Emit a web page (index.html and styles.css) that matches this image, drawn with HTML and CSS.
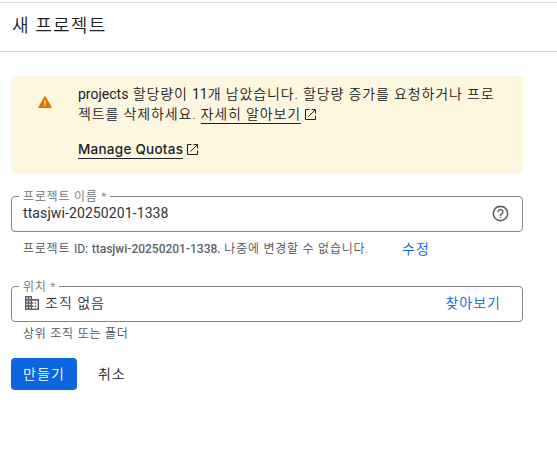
FILE: index.html
```
<!DOCTYPE html>
<html lang="ko">
<head>
<meta charset="utf-8">
<title>새 프로젝트</title>
<link rel="stylesheet" href="styles.css">
</head>
<body>
<header class="header"><h1 class="title">새 프로젝트</h1></header>
<main class="main">
  <section class="notice">
    <svg class="warning" viewBox="0 0 14 12"><path d="M7 .3Q7.4.3 7.7.8L13.8 11.2Q14 12 13.2 12H.8Q0 12 .2 11.2L6.3.8Q6.6.3 7 .3Z" fill="#e37400"/><path d="M6.3 4.5h1.4v3.2H6.3zM6.3 8.7h1.4v1.3H6.3z" fill="#fef7e0"/></svg>
    <div class="message">
      <p class="line"><span class="words"><span class="latin">projects</span> 할당량이 <span class="latin">11</span>개 남았습니다. 할당량 증가를 요청하거나 프로</span></p>
      <p class="line"><span>젝트를 삭제하세요.</span> <a class="link more">자세히 알아보기</a><svg class="external" viewBox="0 0 11 11"><path d="M4.5.5h-4v10h10V6.5M6.5.5h4v4M10.2.8 3.5 7.5" /></svg></p>
      <p class="line quotas"><a class="link manage">Manage Quotas</a><svg class="external" viewBox="0 0 11 11"><path d="M4.5.5h-4v10h10V6.5M6.5.5h4v4M10.2.8 3.5 7.5" /></svg></p>
    </div>
  </section>

  <fieldset class="field name">
    <legend>프로젝트 이름 *</legend>
    <div class="row">
      <span class="value">ttasjwi-20250201-1338</span>
      <svg class="help" viewBox="0 0 24 24"><path d="M11 18h2v-2h-2v2zm1-16C6.48 2 2 6.48 2 12s4.48 10 10 10 10-4.48 10-10S17.52 2 12 2zm0 18c-4.41 0-8-3.59-8-8s3.59-8 8-8 8 3.59 8 8-3.59 8-8 8zm0-14c-2.21 0-4 1.79-4 4h2c0-1.1.9-2 2-2s2 .9 2 2c0 2-3 1.75-3 5h2c0-2.25 3-2.5 3-5 0-2.21-1.79-4-4-4z"/></svg>
    </div>
  </fieldset>
  <div class="hint id-hint"><span class="id-text">프로젝트 <span class="latin">ID:</span> <b>ttasjwi-20250201-1338.</b> 나중에 변경할 수 없습니다.</span><a class="action">수정</a></div>

  <fieldset class="field place">
    <legend>위치 *</legend>
    <div class="row">
      <svg class="building" viewBox="2 3 20 18" preserveAspectRatio="none"><path d="M12 7V3H2v18h20V7H12zM6 19H4v-2h2v2zm0-4H4v-2h2v2zm0-4H4V9h2v2zm0-4H4V5h2v2zm4 12H8v-2h2v2zm0-4H8v-2h2v2zm0-4H8V9h2v2zm0-4H8V5h2v2zm10 12h-8v-2h2v-2h-2v-2h2v-2h-2V9h8v10zm-2-8h-2v2h2v-2zm0 4h-2v2h2v-2z"/></svg>
      <span class="org">조직 없음</span>
      <a class="action browse">찾아보기</a>
    </div>
  </fieldset>
  <div class="hint place-hint">상위 조직 또는 폴더</div>

  <div class="buttons"><button class="create">만들기</button><button class="cancel">취소</button></div>
</main>
</body>
</html>
```
FILE: styles.css
```
* { box-sizing: border-box; }
body {
  margin: 0;
  padding-top: 2px;
  background: #fff;
  color: #202124;
  font: 300 14px/20px Roboto, "Noto Sans CJK KR DemiLight", "Noto Sans CJK KR", sans-serif;
  letter-spacing: .87px;
  white-space: nowrap;
}
p, h1 { margin: 0; }
.latin { font-weight: 400; letter-spacing: 0; }
.header {
  height: 50px;
  padding: 11px 12px 0;
  border-top: 1px solid #dadce0;
  border-bottom: 1px solid #dadce0;
}
.title { font-size: 18px; line-height: 24px; font-weight: 300; letter-spacing: 1.2px; }
.main { width: 512px; margin: 24px 0 0 11px; }
.notice {
  display: flex;
  height: 98px;
  border-radius: 4px;
  background: #fef7e0;
}
.warning { flex: none; width: 14px; height: 12px; margin: 20px 26px 0 27px; }
.message { padding-top: 8px; }
.line { display: flex; height: 20px; align-items: flex-start; }
.link { height: 20px; line-height: 20px; border-bottom: 1px solid #202124; }
.more { margin-left: 4px; }
.external { width: 11px; height: 11px; margin: 5px 0 0 4px; fill: none; stroke: #202124; stroke-width: 1; }
.quotas { margin-top: 15px; }
.manage { font: 500 13.5px/20px Inter, sans-serif; letter-spacing: .25px; }
.field {
  display: block;
  min-width: 0;
  margin: 0;
  padding: 0 12px 0 7px;
  border: 1px solid #80868b;
  border-radius: 4px;
}
.name { height: 44px; margin-top: 14px; }
.field legend {
  height: 16px;
  padding: 0 3px 0 4px;
  color: #6b7177;
  font-size: 12px;
  line-height: 18px;
  letter-spacing: .77px;
}
.row { display: flex; align-items: center; height: 20px; margin: -1px 0 0 4px; color: #303337; }
.value { font-weight: 400; letter-spacing: .1px; }
.help { width: 19px; height: 19px; margin-left: auto; fill: #5f6368; }
.hint { margin-left: 12px; color: #4c5054; font-size: 12px; line-height: 16px; letter-spacing: .77px; }
.id-hint { display: flex; align-items: center; height: 20px; margin-top: 7px; }
.id-hint b { color: #5f6368; font-weight: 500; letter-spacing: 0; }
.id-text { width: 379px; }
.action { color: #0b62dc; font-size: 14px; letter-spacing: 1px; }
.place { height: 44px; margin-top: 19px; }
.building { width: 14px; height: 14px; margin: 0 6px 0 2px; fill: #5f6368; }
.org { letter-spacing: 1px; }
.browse { margin: 0 9px 0 auto; }
.place-hint { margin-top: 4px; }
.buttons { display: flex; margin-top: 16px; }
.buttons button {
  height: 32px;
  padding: 0;
  border: 0;
  border-radius: 4px;
  background: none;
  color: #202124;
  font: inherit;
  letter-spacing: 1.1px;
}
.buttons .create { width: 66px; background: #0b66e0; color: #fff; font-weight: 400; }
.buttons .cancel { width: 70px; }
```
